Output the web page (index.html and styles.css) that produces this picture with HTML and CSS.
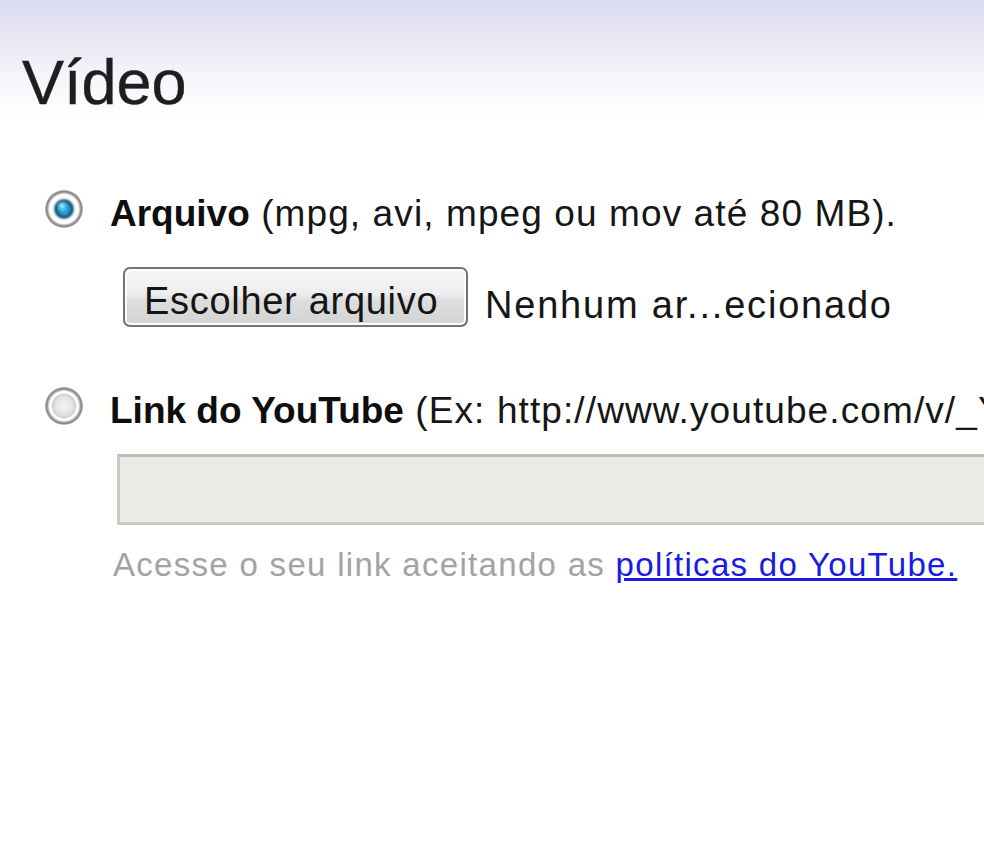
FILE: index.html
```html
<!DOCTYPE html>
<html lang="pt-BR">
<head>
<meta charset="utf-8">
<title>Vídeo</title>
<link rel="stylesheet" href="styles.css">
</head>
<body>
<div class="page">
  <h1 class="title">Vídeo</h1>

  <div class="option">
    <span class="radio checked"></span>
    <div class="option-body">
      <p class="label"><b>Arquivo</b> (mpg, avi, mpeg ou mov até 80 MB).</p>
      <div class="file">
        <button class="btn" type="button">Escolher arquivo</button>
        <span class="fname">Nenhum ar...ecionado</span>
      </div>
    </div>
  </div>

  <div class="option option-second">
    <span class="radio"></span>
    <div class="option-body">
      <p class="label"><b>Link do YouTube</b> (Ex: http://www.youtube.com/v/_Y)</p>
      <div class="url"></div>
      <p class="help">Acesse o seu link aceitando as <a href="#" class="link">políticas do YouTube.</a></p>
    </div>
  </div>
</div>
</body>
</html>
```
FILE: styles.css
```css
html, body {
  margin: 0;
  padding: 0;
  overflow: hidden;
}

body {
  width: 984px;
  height: 853px;
  background: #fff linear-gradient(to bottom, #dcdcf0 0px, #e8e8f5 40px, #f6f6fb 80px, #ffffff 118px) no-repeat;
  background-size: 100% 120px;
  font-family: "Liberation Sans", Arial, sans-serif;
  color: #161616;
}

.page {
  padding-top: 51px;
}

.title {
  margin: 0 0 76px 22px;
  font-size: 63px;
  line-height: 63px;
  font-weight: normal;
  color: #1e1e1e;
  -webkit-text-stroke: 0.4px #1e1e1e;
}

.option {
  display: flex;
  align-items: flex-start;
}

.option-second {
  margin-top: 60px;
}

.radio {
  flex: none;
  width: 38px;
  height: 38px;
  margin-left: 45px;
  margin-right: 27px;
  border-radius: 50%;
  background: radial-gradient(circle, #f6f6f6 0px, #e2e2e2 9px, #cfcfcf 11.5px, #fdfdfd 13px, #ffffff 14.5px, #b5b5b5 16px, #828282 17.5px, #c4c4c4 19px, rgba(255,255,255,0) 19.5px);
}

.radio.checked {
  background:
    radial-gradient(circle at 45% 42%, rgba(190,240,255,0.95) 0px, rgba(120,210,240,0.6) 3px, rgba(0,0,0,0) 6px),
    radial-gradient(circle, #3fb0dc 0px, #2393c6 5px, #0d5f8e 8px, #56778c 9px, #d9d9d9 10.5px, #ffffff 12px, #ffffff 14.5px, #b5b5b5 16px, #828282 17.5px, #c4c4c4 19px, rgba(255,255,255,0) 19.5px);
}

.option-body {
  display: flex;
  flex-direction: column;
  align-items: flex-start;
  white-space: nowrap;
}

.label {
  margin: 2px 0 0 0;
  font-size: 37px;
  line-height: 44px;
  letter-spacing: 1.1px;
}

.label b {
  letter-spacing: 0;
  color: #0e0e0e;
}

.file {
  display: flex;
  align-items: flex-start;
  margin-top: 31px;
  margin-left: 13px;
}

.btn {
  box-sizing: border-box;
  width: 345px;
  height: 60px;
  margin: 0;
  padding: 8px 0 0 19px;
  text-align: left;
  vertical-align: top;
  border: 2px solid #747474;
  border-radius: 7px;
  background: linear-gradient(to bottom, #f7f7f7 0%, #ededed 45%, #dedede 55%, #d3d3d3 100%);
  box-shadow: inset 0 0 0 2px #fbfbfb;
  font-family: "Liberation Sans", Arial, sans-serif;
  font-size: 38px;
  line-height: 44px;
  letter-spacing: 0.7px;
  color: #141414;
}

.fname {
  margin-top: 16px;
  margin-left: 17px;
  font-size: 38px;
  line-height: 44px;
  letter-spacing: 1.8px;
}

.url {
  box-sizing: border-box;
  width: 900px;
  height: 71px;
  margin-top: 21px;
  margin-left: 7px;
  border: 3px solid #c9c9c6;
  border-top-color: #bdbdbb;
  background: #ebebe6;
}

.help {
  margin: 20px 0 0 3px;
  font-size: 33px;
  line-height: 40px;
  letter-spacing: 1.3px;
  color: #a3a3a3;
}

.link {
  color: #1a1ae6;
  text-decoration: underline;
}
```
